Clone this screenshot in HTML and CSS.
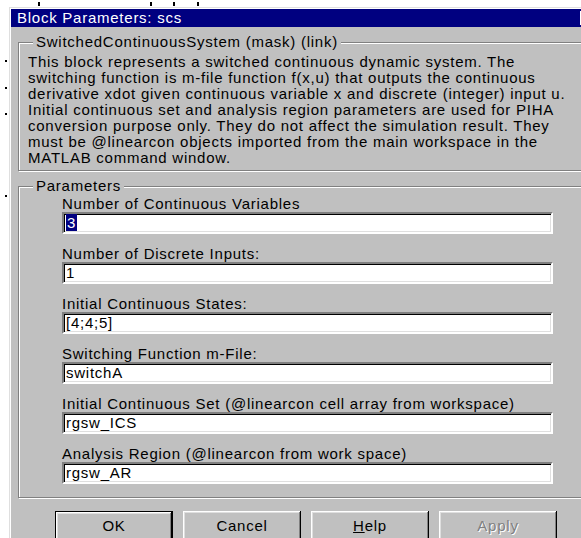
FILE: index.html
```html
<!DOCTYPE html>
<html lang="en">
<head>
<meta charset="utf-8">
<title>Block Parameters: scs</title>
<link rel="stylesheet" href="styles.css">
</head>
<body>
<div class="desk">
  <span class="tick tick-top t1"></span>
  <span class="tick tick-top t2"></span>
  <span class="tick tick-top t3"></span>
  <span class="tick tick-top t4"></span>
  <span class="tick tick-left l1"></span>
  <span class="tick tick-left l2"></span>
  <span class="tick tick-left l3"></span>
  <span class="tick tick-left l4"></span>

  <div class="dialog">
    <div class="titlebar">
      <span class="title">Block Parameters: scs</span>
      <span class="close"></span>
    </div>
    <div class="body">
      <fieldset class="group">
        <legend>SwitchedContinuousSystem (mask) (link)</legend>
        <p class="desc">This block represents a switched continuous dynamic system. The<br>switching function is m-file function f(x,u) that outputs the continuous<br>derivative xdot given continuous variable x and discrete (integer) input u.<br>Initial continuous set and analysis region parameters are used for PIHA<br>conversion purpose only. They do not affect the simulation result. They<br>must be @linearcon objects imported from the main workspace in the<br>MATLAB command window.</p>
      </fieldset>

      <fieldset class="group params">
        <legend>Parameters</legend>
        <div class="fields">
          <div class="field">
            <label class="label">Number of Continuous Variables</label>
            <div class="edit"><span class="sel">3</span></div>
          </div>
          <div class="field">
            <label class="label">Number of Discrete Inputs:</label>
            <div class="edit">1</div>
          </div>
          <div class="field">
            <label class="label">Initial Continuous States:</label>
            <div class="edit">[4;4;5]</div>
          </div>
          <div class="field">
            <label class="label">Switching Function m-File:</label>
            <div class="edit">switchA</div>
          </div>
          <div class="field">
            <label class="label">Initial Continuous Set (@linearcon cell array from workspace)</label>
            <div class="edit">rgsw_ICS</div>
          </div>
          <div class="field">
            <label class="label">Analysis Region (@linearcon from work space)</label>
            <div class="edit">rgsw_AR</div>
          </div>
        </div>
      </fieldset>

      <div class="buttons">
        <button class="btn btn-default" type="button">OK</button>
        <button class="btn" type="button">Cancel</button>
        <button class="btn" type="button"><u>H</u>elp</button>
        <button class="btn btn-disabled" type="button">Apply</button>
      </div>
    </div>
  </div>
</div>
</body>
</html>
```

FILE: styles.css
```css
html, body {
  margin: 0;
  height: 100%;
  overflow: hidden;
  background: #fff;
}

body {
  font-family: "Liberation Sans", Arial, sans-serif;
  font-size: 15px;
  letter-spacing: 0.75px;
  color: #000;
}

.desk {
  position: relative;
  width: 581px;
  height: 538px;
  overflow: hidden;
  background: #fff;
}

/* stray marks on the canvas behind the window */
.tick {
  position: absolute;
  background: #000;
}
.tick-top { top: 2px; width: 2px; height: 4px; }
.tick-left { left: 5px; width: 2px; height: 2px; }
.t1 { left: 38px; }
.t2 { left: 150px; }
.t3 { left: 173px; }
.t4 { left: 197px; }
.l1 { top: 60px; }
.l2 { top: 87px; }
.l3 { top: 113px; }
.l4 { top: 195px; }

/* window frame, wider than the visible area */
.dialog {
  box-sizing: border-box;
  width: 640px;
  height: 620px;
  margin: 7px 0 0 9px;
  padding: 1px 0 0 1px;
  background: #c0c0c0;
  border-top: 1px solid #dfdfdf;
  border-left: 1px solid #dfdfdf;
  box-shadow: inset 1px 1px 0 #fff;
}

.titlebar {
  display: flex;
  align-items: center;
  justify-content: space-between;
  height: 18px;
  padding-left: 6px;
  background: #000080;
  color: #fff;
}

.title {
  line-height: 18px;
}

.close {
  width: 16px;
  height: 14px;
  margin-right: 53px;
  background: #c0c0c0;
  box-shadow: inset 1px 1px 0 #fff, inset -1px -1px 0 #000;
}

.body {
  padding: 7px 0 0 0;
}

/* etched group boxes; their right side runs past the window edge */
.group {
  margin: 0 8px 0 7px;
  padding: 0;
  border: 1px solid #808080;
  box-shadow: 1px 1px 0 #fff, inset 1px 1px 0 #fff;
  min-width: 0;
}

.group legend {
  margin-left: 14px;
  padding: 0 3px;
  line-height: 16px;
  background: #c0c0c0;
}

.desc {
  margin: 0;
  padding: 4px 0 4px 9px;
  line-height: 16px;
  white-space: nowrap;
}

.params {
  margin-top: 7px;
}

.fields {
  display: flex;
  flex-direction: column;
  gap: 12px;
  padding: 2px 0 13px 43px;
}

.field {
  display: flex;
  flex-direction: column;
}

.label {
  line-height: 16px;
  white-space: nowrap;
}

.edit {
  box-sizing: border-box;
  width: 491px;
  height: 22px;
  padding-left: 2px;
  line-height: 18px;
  background: #fff;
  border: 2px solid;
  border-color: #808080 #fff #fff #808080;
  box-shadow: inset 1px 1px 0 #000, inset -1px -1px 0 #dfdfdf;
  white-space: nowrap;
}

.sel {
  background: #000080;
  color: #fff;
  padding: 0 1px;
}

/* push buttons */
.buttons {
  display: flex;
  gap: 10px;
  margin-top: 13px;
  padding-left: 44px;
}

.btn {
  box-sizing: border-box;
  width: 118px;
  height: 30px;
  padding: 0 0 2px;
  border: none;
  background: #c0c0c0;
  font: inherit;
  letter-spacing: inherit;
  color: #000;
  box-shadow: inset -1px -1px 0 #000, inset 1px 1px 0 #fff, inset -2px -2px 0 #808080, inset 2px 2px 0 #dfdfdf;
}

.btn-default {
  border: 1px solid #000;
}

.btn-disabled {
  color: #808080;
  text-shadow: 1px 1px 0 #fff;
}
```
